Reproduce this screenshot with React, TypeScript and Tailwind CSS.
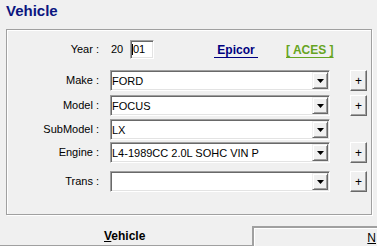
import React from 'react';

const DropArrow = () => (
  <svg width="7" height="4" viewBox="0 0 7 4">
    <polygon points="0,0 7,0 3.5,4" fill="#000" />
  </svg>
);

const Combo = ({ value }: { value: string }) => (
  <div className="flex h-[21px] w-[220px] items-stretch border border-t-[#a0a0a0] border-l-[#a0a0a0] border-b-white border-r-white bg-white shadow-[inset_1px_1px_0_#696969,inset_-1px_-1px_0_#e3e3e3]">
    <div className="flex flex-1 items-center overflow-hidden whitespace-nowrap pl-[1px] pt-[1px] text-[11px] leading-none text-black">
      {value}
    </div>
    <div className="my-[1px] mr-[1px] flex w-[16px] items-center justify-center border border-t-[#f0f0f0] border-l-[#f0f0f0] border-b-[#696969] border-r-[#696969] bg-[#f0f0f0] shadow-[inset_1px_1px_0_#fff,inset_-1px_-1px_0_#a0a0a0]">
      <DropArrow />
    </div>
  </div>
);

const PlusButton = () => (
  <div className="flex h-[21px] w-[17px] items-center justify-center border border-t-white border-l-white border-b-[#696969] border-r-[#696969] bg-[#f0f0f0] text-[12px] leading-none text-black shadow-[inset_-1px_-1px_0_#a0a0a0]">
    +
  </div>
);

type Row = { label: string; value: string; plus: boolean; mt: string };

const rows: Row[] = [
  { label: 'Make :', value: 'FORD', plus: true, mt: 'mt-[11px]' },
  { label: 'Model :', value: 'FOCUS', plus: true, mt: 'mt-[4px]' },
  { label: 'SubModel :', value: 'LX', plus: false, mt: 'mt-[3px]' },
  { label: 'Engine :', value: 'L4-1989CC 2.0L SOHC VIN P', plus: true, mt: 'mt-[2px]' },
  { label: 'Trans :', value: '', plus: true, mt: 'mt-[8px]' },
];

export default function App() {
  return (
    <div className="relative flex h-[246px] w-[377px] flex-col overflow-hidden bg-[#f0f0f0] font-['Liberation_Sans',Arial,sans-serif] text-black">
      {/* Title */}
      <div className="h-[29px] pl-[6px] pt-[2px] text-[15px] font-bold leading-[18px] text-[#0b1580]">Vehicle</div>

      {/* Group box */}
      <div className="ml-[6px] flex h-[186px] w-[366px] flex-col border border-[#a0a0a0] shadow-[inset_1px_1px_0_#fff,1px_1px_0_#fff]">
        {/* Year row */}
        <div className="mt-[10px] flex h-[19px] items-center text-[11px]">
          <div className="w-[92px] text-right">Year :</div>
          <div className="ml-[12px] w-[19px]">20</div>
          <div className="flex h-[19px] w-[24px] items-center border border-t-[#a0a0a0] border-l-[#a0a0a0] border-b-white border-r-white bg-white pl-[1px] shadow-[inset_1px_1px_0_#696969,inset_-1px_-1px_0_#e3e3e3]">
            <span className="h-[11px] w-[1px] bg-black" />
            <span>01</span>
          </div>
          <a className="ml-[60px] whitespace-pre text-[12px] font-bold text-[#000080] underline underline-offset-[3px]">{' Epicor '}</a>
          <a className="ml-[28px] whitespace-pre text-[12px] font-bold text-[#66a421] underline underline-offset-[3px]">{'[ ACES ]'}</a>
        </div>

        {rows.map((r) => (
          <div key={r.label} className={`${r.mt} flex h-[21px] items-center`}>
            <div className="w-[92px] text-right text-[11px]">{r.label}</div>
            <div className="ml-[11px]">
              <Combo value={r.value} />
            </div>
            {r.plus && (
              <div className="ml-[20px]">
                <PlusButton />
              </div>
            )}
          </div>
        ))}
      </div>

      {/* Bottom tabs */}
      <div className="mt-[1px] flex flex-1">
        <div className="flex w-[252px] items-start justify-start border-b border-[#a0a0a0] pl-[104px] pt-[14px]">
          <span className="text-[12px] font-bold leading-none">
            <span className="underline">V</span>ehicle
          </span>
        </div>
        <div className="mt-[10px] flex flex-1 justify-end border-l-2 border-t-2 border-[#a0a0a0] pr-[1px] pt-[4px] shadow-[inset_1px_1px_0_#fff]">
          <span className="text-[12px] leading-none underline">N</span>
        </div>
      </div>
    </div>
  );
}
